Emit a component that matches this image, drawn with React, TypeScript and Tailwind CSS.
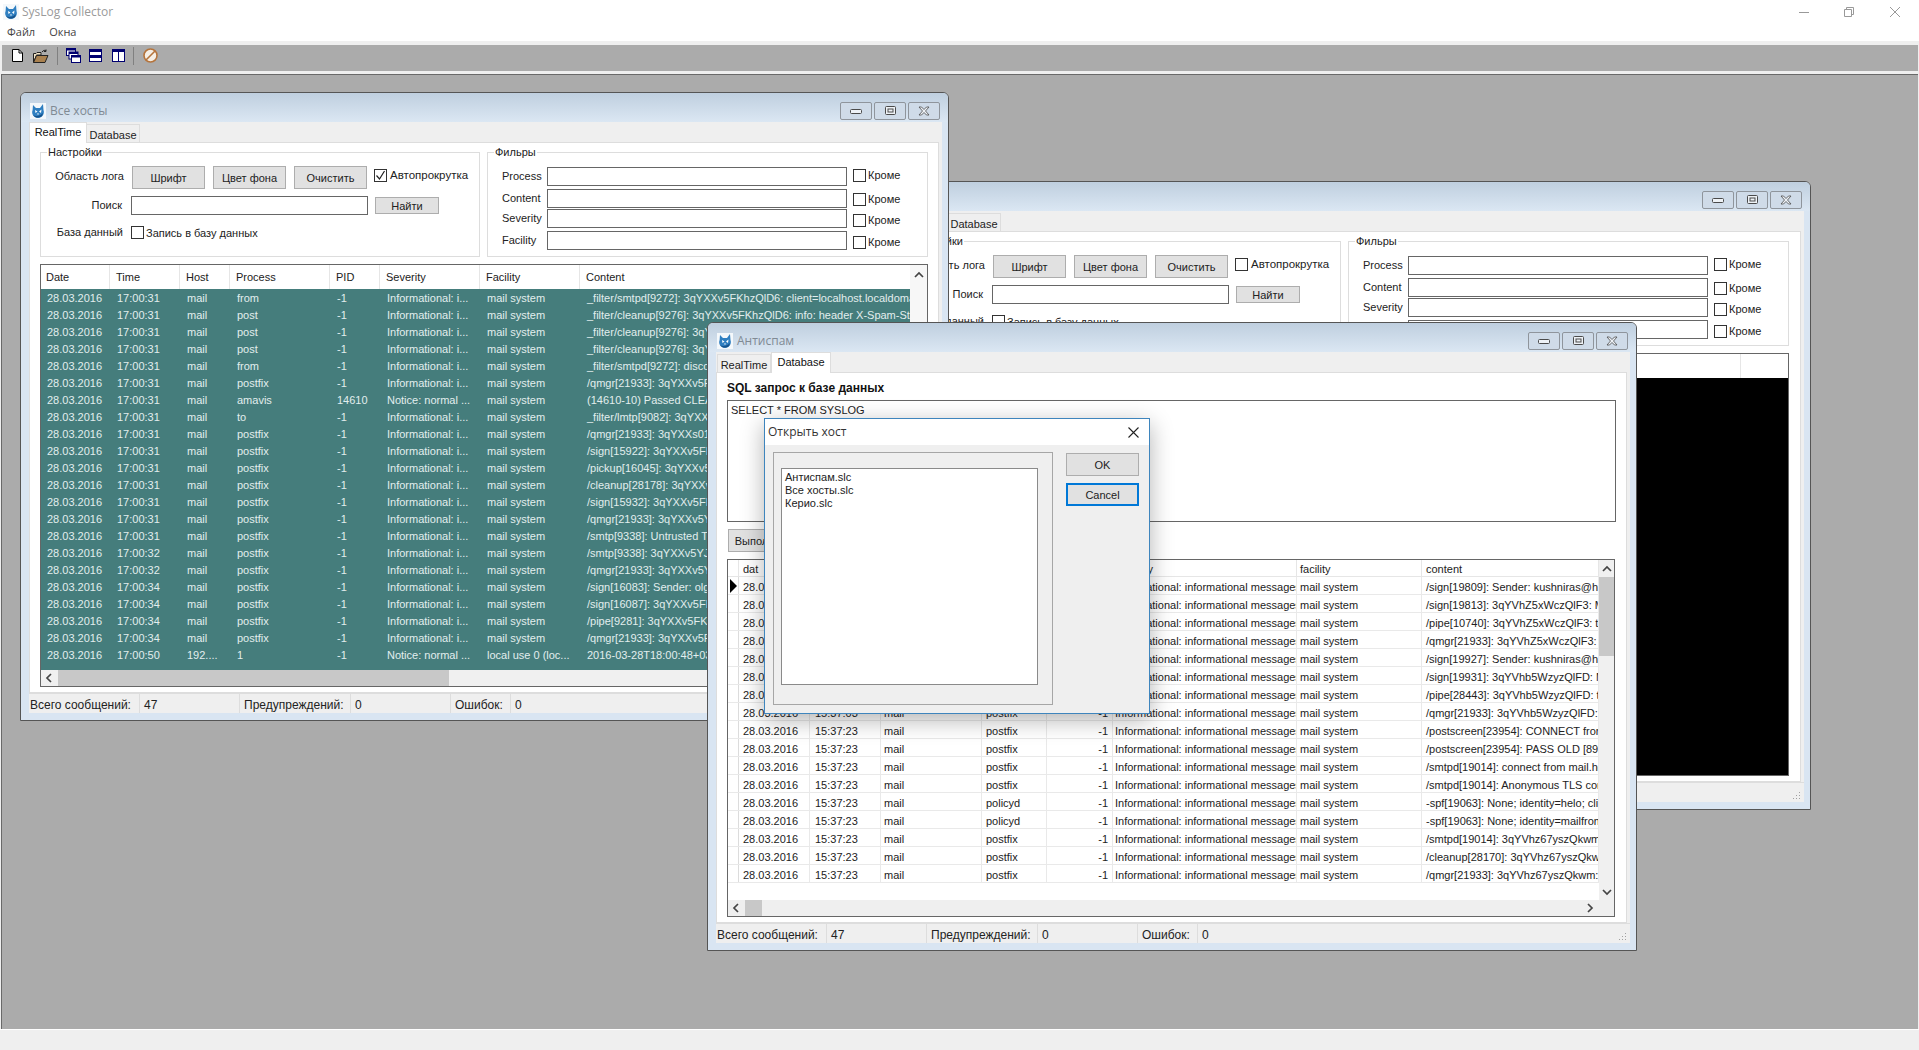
import React from 'react';

type LogRow = [string, string, string, string, string, string, string];

const INFO = 'Informational: i...';
const MS = 'mail system';

const logRows: LogRow[] = [
  ['17:00:31', 'mail', 'from', '-1', INFO, MS, '_filter/smtpd[9272]: 3qYXXv5FKhzQlD6: client=localhost.localdomain'],
  ['17:00:31', 'mail', 'post', '-1', INFO, MS, '_filter/cleanup[9276]: 3qYXXv5FKhzQlD6: info: header X-Spam-Status'],
  ['17:00:31', 'mail', 'post', '-1', INFO, MS, '_filter/cleanup[9276]: 3qYXXv5FKhzQlD6: info: header'],
  ['17:00:31', 'mail', 'post', '-1', INFO, MS, '_filter/cleanup[9276]: 3qYXXv5FKhzQlD6: message-id'],
  ['17:00:31', 'mail', 'from', '-1', INFO, MS, '_filter/smtpd[9272]: disconnect from localhost'],
  ['17:00:31', 'mail', 'postfix', '-1', INFO, MS, '/qmgr[21933]: 3qYXXv5FKhzQlD6: from='],
  ['17:00:31', 'mail', 'amavis', '14610', 'Notice: normal ...', MS, '(14610-10) Passed CLEAN'],
  ['17:00:31', 'mail', 'to', '-1', INFO, MS, '_filter/lmtp[9082]: 3qYXXs01: to='],
  ['17:00:31', 'mail', 'postfix', '-1', INFO, MS, '/qmgr[21933]: 3qYXXs01KhzQlD6: removed'],
  ['17:00:31', 'mail', 'postfix', '-1', INFO, MS, '/sign[15922]: 3qYXXv5FKhzQlD6: to='],
  ['17:00:31', 'mail', 'postfix', '-1', INFO, MS, '/pickup[16045]: 3qYXXv5FKhzQlD6: uid='],
  ['17:00:31', 'mail', 'postfix', '-1', INFO, MS, '/cleanup[28178]: 3qYXXv5FKhzQlD6: message-id'],
  ['17:00:31', 'mail', 'postfix', '-1', INFO, MS, '/sign[15932]: 3qYXXv5FKhzQlD6: to='],
  ['17:00:31', 'mail', 'postfix', '-1', INFO, MS, '/qmgr[21933]: 3qYXXv5YJKhzQlD6: from='],
  ['17:00:31', 'mail', 'postfix', '-1', INFO, MS, '/smtp[9338]: Untrusted TLS connection'],
  ['17:00:32', 'mail', 'postfix', '-1', INFO, MS, '/smtp[9338]: 3qYXXv5YJKhzQlD6: to='],
  ['17:00:32', 'mail', 'postfix', '-1', INFO, MS, '/qmgr[21933]: 3qYXXv5YJKhzQlD6: removed'],
  ['17:00:34', 'mail', 'postfix', '-1', INFO, MS, '/sign[16083]: Sender: olga'],
  ['17:00:34', 'mail', 'postfix', '-1', INFO, MS, '/sign[16087]: 3qYXXv5FKhzQlD6: to='],
  ['17:00:34', 'mail', 'postfix', '-1', INFO, MS, '/pipe[9281]: 3qYXXv5FKhzQlD6: to='],
  ['17:00:34', 'mail', 'postfix', '-1', INFO, MS, '/qmgr[21933]: 3qYXXv5FKhzQlD6: removed'],
  ['17:00:50', '192....', '1', '-1', 'Notice: normal ...', 'local use 0  (loc...', '2016-03-28T18:00:48+03:00'],
];

const dbRows: [string, string, string][] = [
  ['15:37:03', 'postfix', '/sign[19809]: Sender: kushniras@hardware'],
  ['15:37:03', 'postfix', '/sign[19813]: 3qYVhZ5xWczQlF3: Message'],
  ['15:37:03', 'postfix', '/pipe[10740]: 3qYVhZ5xWczQlF3: to='],
  ['15:37:03', 'postfix', '/qmgr[21933]: 3qYVhZ5xWczQlF3: removed'],
  ['15:37:03', 'postfix', '/sign[19927]: Sender: kushniras@hardware'],
  ['15:37:03', 'postfix', '/sign[19931]: 3qYVhb5WzyzQlFD: Message'],
  ['15:37:03', 'postfix', '/pipe[28443]: 3qYVhb5WzyzQlFD: to='],
  ['15:37:03', 'postfix', '/qmgr[21933]: 3qYVhb5WzyzQlFD: removed'],
  ['15:37:23', 'postfix', '/postscreen[23954]: CONNECT from [89.1.1.1]'],
  ['15:37:23', 'postfix', '/postscreen[23954]: PASS OLD [89.1.1.1]'],
  ['15:37:23', 'postfix', '/smtpd[19014]: connect from mail.host'],
  ['15:37:23', 'postfix', '/smtpd[19014]: Anonymous TLS connection'],
  ['15:37:23', 'policyd', '-spf[19063]: None; identity=helo; client'],
  ['15:37:23', 'policyd', '-spf[19063]: None; identity=mailfrom; client'],
  ['15:37:23', 'postfix', '/smtpd[19014]: 3qYVhz67yszQkwm: client'],
  ['15:37:23', 'postfix', '/cleanup[28170]: 3qYVhz67yszQkwm: message'],
  ['15:37:23', 'postfix', '/qmgr[21933]: 3qYVhz67yszQkwm: from'],
];

const logHeaders = ['Date', 'Time', 'Host', 'Process', 'PID', 'Severity', 'Facility', 'Content'];
const logWidths = ['w-[69px]', 'w-[70px]', 'w-[50px]', 'w-[100px]', 'w-[50px]', 'w-[100px]', 'w-[100px]'];

const dbHeaders = ['dat', 'time', 'host', 'process', 'pid', 'severity', 'facility', 'content'];
const dbWidths = [
  'w-[71px] pl-[4px]',
  'w-[71px] pl-[5px]',
  'w-[101px] pl-[3px]',
  'w-[65px] pl-[4px]',
  'w-[66px] pr-[4px] text-right',
  'w-[184px] pl-[2px]',
  'w-[125px] pl-[3px]',
  'w-[177px] pl-[4px]',
];

function Logo() {
  return (
    <svg width="16" height="16" viewBox="0 0 16 16" className="shrink-0">
      <rect width="16" height="16" fill="#f4f8fb" />
      <path d="M3 2 L6 5 H10 L13 1 L13.5 7 C15 11 12 15 8 15 C4 15 1 11 2.6 7 Z" fill="#2f7fc1" />
      <path d="M5 7 L7.5 8.5 L5.5 10 Z M11.5 6.5 L9 8.5 L11 10 Z" fill="#fff" />
      <path d="M3 12 C6 14 10 13 13 10 L12 13 C9 15.5 5 15 3 12 Z" fill="#16538c" />
      <path d="M7 10.5 L9 10.5 L8 12 Z" fill="#fff" />
    </svg>
  );
}

function ToolbarIcons() {
  return (
    <div className="flex items-center h-full pl-[10px] pb-[5px]">
      <svg width="11" height="13" viewBox="0 0 11 13">
        <path d="M.5.5 H7 L10.5 4 V12.5 H.5 Z" fill="#fff" stroke="#000" />
        <path d="M7 .5 V4 H10.5" fill="none" stroke="#000" />
      </svg>
      <svg width="16" height="14" viewBox="0 0 16 14" className="ml-[10px]">
        <path d="M.5 13.5 V4.5 H3 L4 3.5 H8 V6 H3.5 L.5 13.5" fill="#f4e6c8" stroke="#222" />
        <path d="M.5 13.5 L3.5 6.5 H15 L12 13.5 Z" fill="#a9814f" stroke="#222" />
        <path d="M9 3 C10.5 1 12 1 13 2 M13 .5 V2.5 H11" fill="none" stroke="#222" />
      </svg>
      <div className="w-[1px] h-[18px] bg-[#808080] ml-[8px]" />
      <svg width="15" height="15" viewBox="0 0 15 15" className="ml-[8px]">
        <rect x=".5" y=".5" width="9" height="7" fill="#fff" stroke="#000070" />
        <rect x=".5" y=".5" width="9" height="2" fill="#000070" />
        <rect x="3" y="4" width="9" height="7" fill="#fff" stroke="#000070" />
        <rect x="3" y="4" width="9" height="2" fill="#000070" />
        <rect x="5.5" y="7.5" width="9" height="7" fill="#fff" stroke="#000070" />
        <rect x="5.5" y="7.5" width="9" height="2" fill="#000070" />
      </svg>
      <svg width="13" height="13" viewBox="0 0 13 13" className="ml-[8px]">
        <rect x=".5" y=".5" width="12" height="12" fill="#fff" stroke="#000070" />
        <rect x="0" y="0" width="13" height="3" fill="#000070" />
        <rect x="0" y="6" width="13" height="3" fill="#000070" />
      </svg>
      <svg width="13" height="13" viewBox="0 0 13 13" className="ml-[10px]">
        <rect x=".5" y=".5" width="12" height="12" fill="#fff" stroke="#000070" />
        <rect x="0" y="0" width="13" height="3" fill="#000070" />
        <rect x="6" y="0" width="1" height="13" fill="#000070" />
      </svg>
      <div className="w-[1px] h-[18px] bg-[#808080] ml-[8px]" />
      <svg width="15" height="15" viewBox="0 0 15 15" className="ml-[9px]">
        <circle cx="7.5" cy="7.5" r="6.5" fill="#f5efe6" stroke="#b5743c" strokeWidth="1.6" />
        <path d="M3 12 L12 3" stroke="#b5743c" strokeWidth="1.6" />
      </svg>
    </div>
  );
}

function WinButton({ kind }: { kind: 'min' | 'max' | 'close' }) {
  return (
    <div className="w-[32px] h-[18px] border border-[#8f959c] rounded-[2px] flex items-center justify-center bg-[#cfdbe8]">
      {kind === 'min' && (
        <svg width="12" height="6" viewBox="0 0 12 6" className="mt-[3px]">
          <rect x=".5" y=".5" width="11" height="4" rx="1" fill="#eef2f6" stroke="#4a4a4a" />
        </svg>
      )}
      {kind === 'max' && (
        <svg width="11" height="9" viewBox="0 0 11 9">
          <rect x=".5" y=".5" width="10" height="8" rx="1" fill="#eef2f6" stroke="#4a4a4a" />
          <rect x="3" y="3" width="5" height="3" fill="none" stroke="#4a4a4a" />
        </svg>
      )}
      {kind === 'close' && (
        <svg width="12" height="10" viewBox="0 0 12 10">
          <path d="M1 1 H3.5 L6 3.5 L8.5 1 H11 L7.5 5 L11 9 H8.5 L6 6.5 L3.5 9 H1 L4.5 5 Z" fill="#eef2f6" stroke="#4a4a4a" strokeWidth=".8" />
        </svg>
      )}
    </div>
  );
}

function Checkbox({ checked }: { checked?: boolean }) {
  return (
    <span className="w-[13px] h-[13px] shrink-0 border border-[#333] bg-white flex items-center justify-center">
      {checked && (
        <svg width="11" height="11" viewBox="0 0 11 11">
          <path d="M1.5 5.5 L4.5 9 L9.5 1" fill="none" stroke="#222" strokeWidth="1.2" />
        </svg>
      )}
    </span>
  );
}

function Btn({ children, className }: { children: React.ReactNode; className: string }) {
  return (
    <button className={`shrink-0 bg-[#e1e1e1] border border-[#adadad] flex items-center justify-center pt-[1px] text-[#222] ${className}`}>
      {children}
    </button>
  );
}

function GroupBox({ title, className, children }: { title: string; className: string; children: React.ReactNode }) {
  return (
    <div className={`relative h-[105px] border border-[#ddd] ${className}`}>
      <span className="absolute left-[6px] -top-[8px] bg-white pl-[1px] pr-[1px] leading-[14px]">{title}</span>
      {children}
    </div>
  );
}

function TextBox({ className }: { className: string }) {
  return <input readOnly className={`shrink-0 border border-[#666] bg-white outline-none ${className}`} />;
}

const filterRows = [
  { label: 'Process', margin: 'mt-[14px]', nudge: '-mt-[3px]' },
  { label: 'Content', margin: 'mt-[3px]', nudge: 'mt-[1px]' },
  { label: 'Severity', margin: 'mt-[1px]', nudge: 'mt-[3px]' },
  { label: 'Facility', margin: 'mt-[3px]', nudge: 'mt-[3px]' },
];

function SettingsPanels({ autoscroll }: { autoscroll: boolean }) {
  return (
    <div className="flex gap-[7px] pl-[10px] pt-[9px]">
      <GroupBox title="Настройки" className="w-[440px]">
        <div className="flex items-center h-[23px] mt-[13px]">
          <span className="w-[83px] text-right -mt-[2px] whitespace-nowrap">Область лога</span>
          <Btn className="w-[73px] h-[23px] ml-[8px]">Шрифт</Btn>
          <Btn className="w-[73px] h-[23px] ml-[8px]">Цвет фона</Btn>
          <Btn className="w-[73px] h-[23px] ml-[8px]">Очистить</Btn>
          <span className="ml-[7px] -mt-[4px]">
            <Checkbox checked={autoscroll} />
          </span>
          <span className="ml-[3px] -mt-[3px] text-[11.5px] whitespace-nowrap">Автопрокрутка</span>
        </div>
        <div className="flex items-center h-[19px] mt-[7px]">
          <span className="w-[81px] text-right">Поиск</span>
          <TextBox className="w-[237px] h-[19px] ml-[9px]" />
          <Btn className="w-[64px] h-[17px] ml-[7px]">Найти</Btn>
        </div>
        <div className="flex items-center h-[13px] mt-[11px]">
          <span className="w-[82px] text-right whitespace-nowrap">База данный</span>
          <span className="ml-[8px]">
            <Checkbox />
          </span>
          <span className="ml-[2px] mt-[1px] whitespace-nowrap">Запись в базу данных</span>
        </div>
      </GroupBox>
      <GroupBox title="Фильры" className="w-[441px]">
        {filterRows.map((row) => (
          <div key={row.label} className={`flex items-center h-[19px] pl-[14px] ${row.margin}`}>
            <span className="w-[45px]">{row.label}</span>
            <TextBox className="w-[300px] h-[19px]" />
            <span className={`ml-[6px] ${row.nudge}`}>
              <Checkbox />
            </span>
            <span className={`ml-[2px] ${row.nudge}`}>Кроме</span>
          </div>
        ))}
      </GroupBox>
    </div>
  );
}

function Chevron({ dir }: { dir: 'up' | 'down' | 'left' | 'right' }) {
  const paths = {
    up: 'M1 6 L5 2 L9 6',
    down: 'M1 2 L5 6 L9 2',
    left: 'M6 1 L2 5 L6 9',
    right: 'M2 1 L6 5 L2 9',
  };
  const size = dir === 'up' || dir === 'down' ? 'w-[10px] h-[8px]' : 'w-[8px] h-[10px]';
  const box = dir === 'up' || dir === 'down' ? '0 0 10 8' : '0 0 8 10';
  return (
    <svg viewBox={box} className={`shrink-0 ${size}`}>
      <path d={paths[dir]} fill="none" stroke="#444" strokeWidth="1.7" />
    </svg>
  );
}

function LogTable({ empty }: { empty?: boolean }) {
  return (
    <div className="flex w-[888px] h-[423px] mt-[7px] ml-[10px] border border-[#666] bg-white overflow-hidden">
      <div className={`flex flex-col h-full ${empty ? 'w-full' : 'w-[869px]'}`}>
        <div className="flex h-[24px] shrink-0 bg-white">
          {logWidths.map((w, i) => (
            <div key={i} className={`${w} ${i === 0 ? 'pl-[5px]' : 'pl-[6px]'} pt-[4px] border-r border-[#e6e6e6] shrink-0`}>
              {logHeaders[i]}
            </div>
          ))}
          <div className={`pl-[6px] pt-[4px] ${empty ? 'w-[300px] border-r border-[#e6e6e6]' : 'flex-1'}`}>Content</div>
        </div>
        {empty ? (
          <div className="flex-1 bg-black" />
        ) : (
          <>
            <div className="flex-1 min-h-0 bg-[#457d7c] text-[#e2eeee] overflow-hidden">
              {logRows.map((row, r) => (
                <div key={r} className="flex h-[17px] leading-[18px] whitespace-nowrap">
                  <div className="w-[69px] pl-[6px] shrink-0">28.03.2016</div>
                  {row.slice(0, 6).map((cell, i) => (
                    <div key={i} className={`${logWidths[i + 1]} pl-[7px] shrink-0 overflow-hidden`}>
                      {cell}
                    </div>
                  ))}
                  <div className="flex-1 pl-[7px] overflow-hidden">{row[6]}</div>
                </div>
              ))}
            </div>
            <div className="flex items-center h-[16px] shrink-0 bg-[#f0f0f0]">
              <span className="ml-[4px]">
                <Chevron dir="left" />
              </span>
              <div className="w-[391px] h-full bg-[#c8c8c8] ml-[5px]" />
            </div>
          </>
        )}
      </div>
      {!empty && (
        <div className="flex-1 bg-[#f7f7f7] flex flex-col items-center pt-[6px]">
          <Chevron dir="up" />
        </div>
      )}
    </div>
  );
}

function DbTable() {
  return (
    <div className="relative flex flex-col w-[888px] h-[358px] mt-[7px] ml-[10px] border border-[#666] bg-white overflow-hidden">
      <div className="flex flex-1 min-h-0">
        <div className="w-[871px] shrink-0">
          <div className="flex h-[17px] leading-[19px] border-b border-[#e6e6e6]">
            <div className="w-[11px] border-r border-[#e6e6e6]" />
            {dbWidths.map((w, i) => (
              <div key={i} className={`${w} border-r border-[#e6e6e6] whitespace-nowrap`}>
                {dbHeaders[i]}
              </div>
            ))}
          </div>
          {dbRows.map((row, r) => (
            <div key={r} className="flex h-[18px] leading-[21px] border-b border-[#e9e9e9] whitespace-nowrap">
              <div className="w-[11px] border-r border-[#dcdcdc] flex items-center justify-center">
                {r === 0 && (
                  <svg width="7" height="14" viewBox="0 0 7 14">
                    <path d="M0 0 L7 7 L0 14 Z" fill="#000" />
                  </svg>
                )}
              </div>
              {[
                '28.03.2016',
                row[0],
                'mail',
                row[1],
                '-1',
                'Informational: informational messages',
                MS,
                row[2],
              ].map((cell, i) => (
                <div key={i} className={`${dbWidths[i]} border-r border-[#e9e9e9] overflow-hidden`}>
                  {cell}
                </div>
              ))}
            </div>
          ))}
        </div>
        <div className="flex-1 bg-[#f0f0f0] flex flex-col items-center">
          <div className="h-[17px] flex items-center">
            <Chevron dir="up" />
          </div>
          <div className="w-full h-[79px] bg-[#c8c8c8]" />
          <div className="mt-auto h-[17px] flex items-center">
            <Chevron dir="down" />
          </div>
        </div>
      </div>
      <div className="flex items-center h-[16px] shrink-0 bg-[#efefef] pl-[4px] pr-[20px]">
        <Chevron dir="left" />
        <div className="w-[17px] h-full bg-[#c8c8c8] ml-[5px]" />
        <span className="ml-auto">
          <Chevron dir="right" />
        </span>
      </div>
    </div>
  );
}

function StatusBar() {
  return (
    <div className="relative flex h-[20px] shrink-0 border-t border-[#ddd] bg-[#efefef] text-[12px] leading-[22px]">
      <div className="w-[110px] pl-[1px] whitespace-nowrap">Всего сообщений:</div>
      <div className="w-[100px] pl-[4px] border-l border-[#ddd]">47</div>
      <div className="w-[111px] pl-[4px] border-l border-[#ddd] whitespace-nowrap">Предупреждений:</div>
      <div className="w-[100px] pl-[4px] border-l border-[#ddd]">0</div>
      <div className="w-[60px] pl-[4px] border-l border-[#ddd]">Ошибок:</div>
      <div className="pl-[4px] border-l border-[#ddd]">0</div>
      <svg width="9" height="9" viewBox="0 0 9 9" className="absolute right-[3px] bottom-[2px]">
        <path d="M7 1h1v1H7z M4 4h1v1H4z M7 4h1v1H7z M1 7h1v1H1z M4 7h1v1H4z M7 7h1v1H7z" fill="#a0a0a0" />
      </svg>
    </div>
  );
}

function Tab({ label, active, className }: { label: string; active: boolean; className: string }) {
  if (active) {
    return (
      <div className={`relative z-10 h-[21px] -mb-[1px] bg-white border-t border-x border-[#ddd] leading-[19px] text-center text-[#111] ${className}`}>
        {label}
      </div>
    );
  }
  return (
    <div className={`h-[18px] bg-[#efefef] border-t border-r border-[#ddd] leading-[20px] text-center ${className}`}>
      {label}
    </div>
  );
}

function MdiWindow({
  title,
  className,
  activeTab,
  children,
}: {
  title: string;
  className: string;
  activeTab: 'RealTime' | 'Database';
  children: React.ReactNode;
}) {
  const realTime = activeTab === 'RealTime';
  return (
    <div className={`absolute isolate flex flex-col h-[629px] border border-[#555] rounded-t-[6px] bg-[#d9e5f2] overflow-hidden ${className}`}>
      <div className="relative flex items-center h-[29px] shrink-0 pl-[9px] pr-[8px] pt-[6px] bg-linear-to-b from-[#bfcfdf] to-[#dbe7f3]">
        <Logo />
        <span className="ml-[4px] text-[#808a94] text-[12px] font-['Open_Sans',sans-serif]">{title}</span>
        <div className="ml-auto flex gap-[2px]">
          <WinButton kind="min" />
          <WinButton kind="max" />
          <WinButton kind="close" />
        </div>
      </div>
      <div className="flex flex-col flex-1 min-h-0 ml-[8px] mr-[6px] mb-[7px] bg-[#efefef]">
        <div className="flex items-end h-[20px] shrink-0">
          <Tab label="RealTime" active={realTime} className={realTime ? 'w-[58px]' : 'w-[54px] ml-[1px] border-l'} />
          <Tab label="Database" active={!realTime} className={realTime ? 'w-[53px]' : 'w-[60px]'} />
        </div>
        <div className="flex-1 min-h-0 mr-[3px] border border-[#ddd] bg-white">{children}</div>
        <StatusBar />
      </div>
    </div>
  );
}

function OpenHostDialog() {
  return (
    <div className="absolute left-[762px] top-[343px] w-[386px] h-[296px] flex flex-col border border-[#3e85bd] bg-[#efefef] shadow-[0_6px_22px_rgba(0,0,0,0.3)]">
      <div className="flex items-center justify-between h-[26px] shrink-0 bg-white pl-[3px] pr-[10px]">
        <span className="text-[12px] text-[#333] font-['Open_Sans',sans-serif]">Открыть хост</span>
        <svg width="11" height="11" viewBox="0 0 11 11">
          <path d="M.5.5 L10.5 10.5 M10.5.5 L.5 10.5" stroke="#222" strokeWidth="1.1" />
        </svg>
      </div>
      <div className="flex flex-1 pl-[8px] pt-[7px]">
        <div className="w-[280px] h-[253px] border border-[#a6a6a6] pl-[7px] pt-[15px]">
          <div className="w-[257px] h-[217px] border border-[#8a8a8a] bg-white pl-[3px] pt-[2px] leading-[13px]">
            <div>Антиспам.slc</div>
            <div>Все хосты.slc</div>
            <div>Керио.slc</div>
          </div>
        </div>
        <div className="ml-[13px] mt-[1px] flex flex-col gap-[7px]">
          <Btn className="w-[73px] h-[23px]">OK</Btn>
          <Btn className="w-[73px] h-[23px] !border-2 !border-[#0078d7]">Cancel</Btn>
        </div>
      </div>
    </div>
  );
}

export default function App() {
  return (
    <div className="relative flex flex-col w-[1919px] h-[1050px] overflow-hidden bg-[#efefef] text-[11px] text-[#222] font-['Liberation_Sans',sans-serif]">
      {/* Main window caption */}
      <div className="flex items-center justify-between h-[24px] shrink-0 bg-white pl-[3px] pr-[19px]">
        <div className="flex items-center">
          <Logo />
          <span className="ml-[3px] text-[12px] text-[#9a9a9a] font-['Open_Sans',sans-serif]">SysLog Collector</span>
        </div>
        <div className="flex items-center">
          <div className="w-[10px] h-[1px] bg-[#999]" />
          <svg width="10" height="10" viewBox="0 0 10 10" className="ml-[35px]">
            <path d="M.5 2.5 H7.5 V9.5 H.5 Z M2.5 2.5 V.5 H9.5 V7.5 H7.5" fill="none" stroke="#999" />
          </svg>
          <svg width="10" height="10" viewBox="0 0 10 10" className="ml-[36px]">
            <path d="M0 0 L10 10 M10 0 L0 10" stroke="#999" />
          </svg>
        </div>
      </div>
      <div className="flex items-center gap-[14px] h-[17px] shrink-0 bg-white pl-[7px] text-[11px] text-[#444] font-['Open_Sans',sans-serif]">
        <span>Файл</span>
        <span>Окна</span>
      </div>
      <div className="h-[4px] shrink-0" />
      <div className="h-[26px] shrink-0 ml-[2px] mr-[1px] bg-[#ababab]">
        <ToolbarIcons />
      </div>
      <div className="h-[3px] shrink-0" />
      {/* MDI area with free floating child windows */}
      <div className="relative h-[955px] shrink-0 ml-[1px] mr-[1px] border-t border-l border-[#696969] bg-[#ababab]">
        <MdiWindow title="" className="left-[879px] top-[106px] w-[930px]" activeTab="RealTime">
          <SettingsPanels autoscroll={false} />
          <LogTable empty />
        </MdiWindow>
        <MdiWindow title="Все хосты" className="left-[18px] top-[17px] w-[929px]" activeTab="RealTime">
          <SettingsPanels autoscroll />
          <LogTable />
        </MdiWindow>
        <MdiWindow title="Антиспам" className="left-[705px] top-[247px] w-[930px]" activeTab="Database">
          <div className="pl-[10px] pt-[7px] h-[22px] text-[12px] font-bold leading-[16px] text-[#111] whitespace-nowrap">SQL запрос к базе данных</div>
          <div className="w-[889px] h-[122px] mt-[5px] ml-[10px] border border-[#666] bg-white pl-[3px] pt-[1px]">SELECT * FROM SYSLOG</div>
          <Btn className="w-[70px] h-[23px] mt-[7px] ml-[11px]">Выполнить</Btn>
          <DbTable />
        </MdiWindow>
        <OpenHostDialog />
      </div>
      <div className="h-[1px] shrink-0 bg-white" />
    </div>
  );
}
